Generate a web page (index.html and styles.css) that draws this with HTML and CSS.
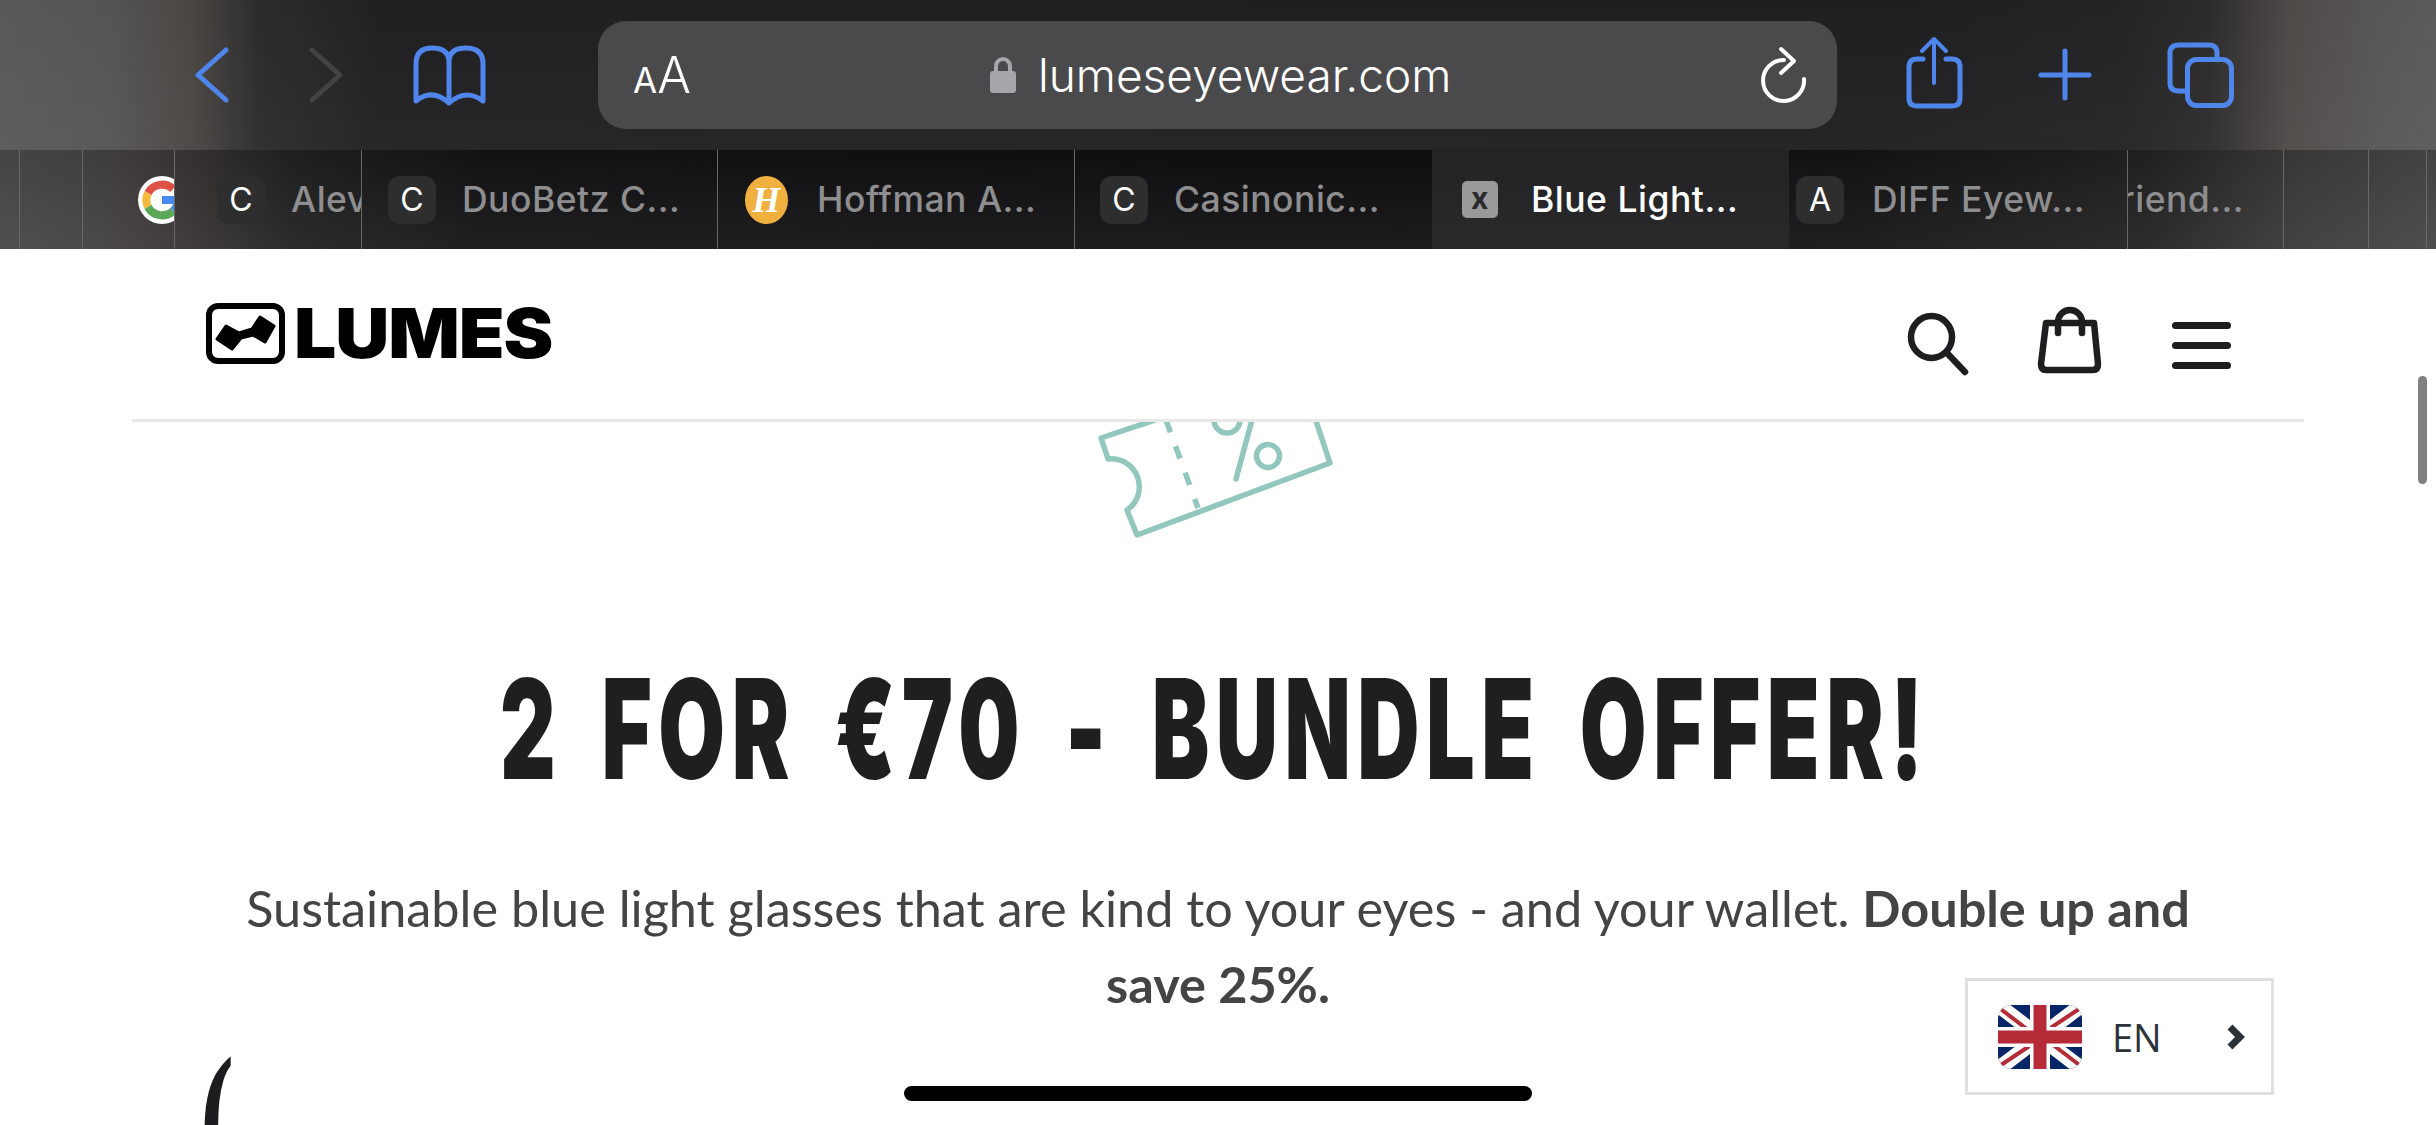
FILE: index.html
```html
<!DOCTYPE html>
<html lang="en">
<head>
    <meta charset="UTF-8">
    <title>2 for €70 - Bundle offer</title>
    <link rel="stylesheet" href="styles.css">
</head>
<body>
    <div class="browser">
        <div class="toolbar">
            <svg class="ico ico-back" viewBox="190 30 45 90"><path d="M226 50 L198 75 L226 100"/></svg>
            <svg class="ico ico-forward" viewBox="305 30 43 90"><path class="dim" d="M312 50 L340 75 L312 100"/></svg>
            <svg class="ico ico-book" viewBox="408 30 83 90">
                <path d="M449 62 Q449 48 432 48 Q416 48 416 64 V101 Q432 88 449 103 Q466 88 483 101 V64 Q483 48 466 48 Q449 48 449 62 V103"/>
            </svg>
            <div class="url-bar">
                <div class="text-size"><span class="small-a">A</span><span class="big-a">A</span></div>
                <div class="address">
                    <svg class="lock" viewBox="0 0 26 36">
                        <path class="shackle" d="M6 16 V9 A7 7 0 0 1 20 9 V16"/>
                        <rect y="14" width="26" height="22" rx="3"/>
                    </svg>
                    <span class="domain">lumeseyewear.com</span>
                </div>
                <svg class="reload" viewBox="1755 40 56 66">
                    <path d="M1804 77 A20.5 20.5 0 1 1 1784 58"/>
                    <path d="M1781 47 L1794 59 L1781 71"/>
                </svg>
            </div>
            <svg class="ico ico-share" viewBox="1900 30 68 90">
                <path d="M1923 59 H1917 Q1909 59 1909 67 V98 Q1909 106 1917 106 H1952 Q1960 106 1960 98 V67 Q1960 59 1952 59 H1946"/>
                <path class="thin" d="M1934 83 V39 M1922 51 L1934 39 L1946 51"/>
            </svg>
            <svg class="ico ico-plus" viewBox="2032 30 66 90"><path d="M2065 51 V98 M2041 75 H2089"/></svg>
            <svg class="ico ico-tabs" viewBox="2162 30 78 90">
                <path d="M2185 91 H2179 Q2170 91 2170 83 V53 Q2170 45 2179 45 H2209 Q2217 45 2217 53 V59"/>
                <rect x="2187.5" y="59.5" width="44" height="46" rx="9"/>
            </svg>
        </div>
        <div class="tab-strip">
            <div class="tab tab-edge-a"></div>
            <div class="tab tab-edge-b"></div>
            <div class="tab tab-google">
                <svg class="fav-google" viewBox="0 0 48 48">
                    <circle cx="24" cy="24" r="24" fill="#fff"/>
                    <path d="M35 13 A16 16 0 0 0 10 17" stroke="#dd5244"/>
                    <path d="M10 17 A16 16 0 0 0 10 31" stroke="#f2b93c"/>
                    <path d="M10 31 A16 16 0 0 0 35 35" stroke="#5aa855"/>
                    <path d="M35 35 A16 16 0 0 0 40 24 H24" stroke="#4a8af0"/>
                </svg>
            </div>
            <div class="tab tab-alev"><span class="fav">C</span><span class="label">Alevante</span></div>
            <div class="tab tab-wide"><span class="fav">C</span><span class="label">DuoBetz C...</span></div>
            <div class="tab tab-hoffman"><span class="fav-hoffman">H</span><span class="label">Hoffman A...</span></div>
            <div class="tab tab-casino"><span class="fav">C</span><span class="label">Casinonic...</span></div>
            <div class="tab tab-active"><span class="fav-close">x</span><span class="label">Blue Light...</span></div>
            <div class="tab tab-diff"><span class="fav">A</span><span class="label">DIFF Eyew...</span></div>
            <div class="tab tab-friend"><span class="label">Friend...</span></div>
            <div class="tab tab-edge-c"></div>
            <div class="tab tab-edge-d"></div>
        </div>
    </div>

    <nav class="site-nav">
        <a class="logo" href="#">
            <svg class="logo-mark" viewBox="206 302 79 61">
                <rect class="logo-frame" x="209" y="305" width="73" height="55" rx="9"/>
                <path class="logo-glasses" d="M226 325 L239 332 L252 328 L260 316 L274 325 L265 341 L253 334 L241 337 L232 348 L217 338 Z"/>
            </svg>
            <span class="logo-text">LUMES</span>
        </a>
        <div class="nav-icons">
            <svg class="nav-search" viewBox="1900 300 72 80">
                <ellipse cx="1931.5" cy="337" rx="20.5" ry="21"/>
                <path d="M1947 353 L1965 372"/>
            </svg>
            <svg class="nav-bag" viewBox="2036 300 68 80">
                <path d="M2046 323 H2094 L2098 364 Q2098 370 2093 370 H2046 Q2041 370 2041 364 Z"/>
                <path d="M2058 333 V322 A12 12 0 0 1 2082 322 V333"/>
            </svg>
            <div class="burger"><span></span><span></span><span></span></div>
        </div>
    </nav>

    <main class="offer">
        <svg class="ticket" viewBox="1090 422 256 123">
            <path d="M1158 419 L1101 438 L1108 459 A28 28 0 0 1 1127 510 L1137 535 L1330 463 L1314 415"/>
            <path class="ticket-dash" d="M1166 420 L1198 508"/>
            <path d="M1252 420 L1236 479"/>
            <circle cx="1227" cy="420" r="13"/>
            <circle cx="1268" cy="456" r="11.5"/>
        </svg>
        <h1 class="offer-title"><span class="offer-title-text">2 FOR €70 - BUNDLE OFFER!</span></h1>
        <p class="offer-text">Sustainable blue light glasses that are kind to your eyes - and your wallet. <strong>Double up and<br>save 25%.</strong></p>
        <div class="quote-mark">(</div>
    </main>

    <div class="lang-switch">
        <svg class="flag" viewBox="0 0 84 64">
            <rect width="84" height="64" fill="#082567"/>
            <path d="M0 0 L84 64 M84 0 L0 64" stroke="#fff" stroke-width="15"/>
            <path d="M0 2 L42 34 M84 2 L42 30 M0 62 L42 34 M84 62 L42 30" stroke="#b52b38" stroke-width="4"/>
            <path d="M42 0 V64 M0 32 H84" stroke="#fff" stroke-width="20"/>
            <path d="M42 0 V64 M0 32 H84" stroke="#b52b38" stroke-width="13"/>
        </svg>
        <span class="lang-code">EN</span>
        <svg class="lang-arrow" viewBox="0 0 18 26"><path d="M3 3 L13 13 L3 23"/></svg>
    </div>

    <div class="scroll-thumb"></div>
    <div class="home-bar"></div>
</body>
</html>
```

FILE: styles.css
```css
* {
    box-sizing: border-box;
}

body {
    margin: 0;
    width: 2436px;
    height: 1125px;
    overflow: hidden;
    position: relative;
    background-color: #ffffff;
    font-family: "Lato", sans-serif;
}

/* Safari bar */
.browser {
    height: 249px;
}

.toolbar {
    height: 150px;
    display: flex;
    align-items: center;
    padding-left: 190px;
    background:
        linear-gradient(to bottom, rgba(255,255,255,0), rgba(255,255,255,0.03)),
        linear-gradient(90deg, #585858 0, #555453 110px, #4a4643 190px, #2c2b2c 260px, #202023 380px, #1f1f22 1900px, #232325 2120px, #2d2b2c 2210px, #4f4a48 2290px, #565554 2370px, #5a5a5a 100%);
}

.ico {
    height: 90px;
    flex: none;
    fill: none;
    stroke: #4f86ec;
    stroke-width: 5;
    stroke-linecap: round;
    stroke-linejoin: round;
}

.ico-back {
    width: 45px;
}

.ico-forward {
    width: 43px;
    margin-left: 70px;
}

.ico .dim {
    stroke: #434345;
}

.ico-book {
    width: 83px;
    margin-left: 60px;
}

.ico-share {
    width: 68px;
    margin-left: 63px;
}

.ico-share .thin {
    stroke-width: 4;
}

.ico-plus {
    width: 66px;
    margin-left: 64px;
}

.ico-tabs {
    width: 78px;
    margin-left: 64px;
}

.url-bar {
    width: 1239px;
    height: 108px;
    margin-left: 107px;
    flex: none;
    display: flex;
    align-items: center;
    padding-left: 35px;
    padding-right: 26px;
    background-color: #4a4a4c;
    border-radius: 28px;
    color: #ffffff;
    font-family: "Inter", sans-serif;
}

.text-size {
    width: 62px;
    display: flex;
    align-items: baseline;
    font-weight: 400;
    height: 60px;
    line-height: 60px;
}

.small-a {
    font-size: 35px;
}

.big-a {
    font-size: 50px;
    font-weight: 300;
}

.address {
    margin-left: 295px;
    display: flex;
    align-items: center;
    gap: 22px;
}

.lock {
    width: 26px;
    height: 36px;
    fill: #a5a5aa;
}

.lock .shackle {
    fill: none;
    stroke: #a5a5aa;
    stroke-width: 4;
}

.domain {
    font-size: 46px;
    font-weight: 300;
    line-height: 60px;
}

.reload {
    width: 56px;
    height: 66px;
    margin-left: auto;
    fill: none;
    stroke: #ffffff;
    stroke-width: 4;
    stroke-linecap: round;
    stroke-linejoin: round;
}

/* tabs */
.tab-strip {
    height: 99px;
    display: flex;
    background:
        linear-gradient(to bottom, rgba(255,255,255,0), rgba(255,255,255,0.06)),
        linear-gradient(90deg, #454545 0, #3f3d3c 110px, #363231 180px, #201f1f 290px, #121214 480px, #0e0e10 1400px, #121214 1850px, #202020 2150px, #383838 2300px, #434343 100%);
}

.tab {
    flex: none;
    height: 99px;
    overflow: hidden;
    display: flex;
    align-items: center;
    gap: 26px;
    border-right: 1px solid #68686a;
    font-family: "Inter", sans-serif;
    font-size: 35.5px;
    font-weight: 500;
    letter-spacing: 0.5px;
    color: #8e8e90;
    white-space: nowrap;
}

.tab-edge-a { width: 20px; }
.tab-edge-b { width: 63px; }
.tab-google { width: 92px; padding-left: 55px; }
.tab-alev { width: 187px; padding-left: 42px; }
.tab-wide { width: 356px; padding-left: 26px; }
.tab-hoffman { width: 357px; padding-left: 27px; gap: 29px; }
.tab-casino { width: 357px; padding-left: 25px; border-right: none; }
.tab-diff { width: 339px; padding-left: 7px; gap: 28px; }
.tab-friend { width: 156px; }
.tab-edge-c { width: 85px; }
.tab-edge-d { width: 58px; }

.tab-active {
    width: 357px;
    padding-left: 30px;
    gap: 33px;
    border-right: none;
    color: #ffffff;
    background: linear-gradient(to bottom, #232326, #29292b);
}

.tab-friend .label {
    margin-left: -28px;
}

.fav {
    flex: none;
    width: 48px;
    height: 48px;
    display: flex;
    align-items: center;
    justify-content: center;
    background-color: #2e2e2f;
    border-radius: 12px;
    color: #ffffff;
    font-size: 32px;
    font-weight: 400;
    letter-spacing: 0;
}

.fav-close {
    flex: none;
    width: 36px;
    height: 37px;
    display: flex;
    align-items: center;
    justify-content: center;
    background-color: #99999b;
    border-radius: 5px;
    color: #2a2a2b;
    font-size: 30px;
    font-weight: 700;
    line-height: 30px;
    padding-bottom: 4px;
}

.fav-hoffman {
    flex: none;
    width: 43px;
    height: 48px;
    display: flex;
    align-items: center;
    justify-content: center;
    background-color: #efb040;
    border-radius: 50%;
    color: #ffffff;
    font-family: "Liberation Serif", serif;
    font-size: 36px;
    font-style: italic;
    font-weight: 700;
}

.fav-google {
    flex: none;
    width: 48px;
    height: 48px;
    fill: none;
    stroke-width: 8;
}

/* site header */
.site-nav {
    position: relative;
    height: 173px;
    margin: 0 132px;
    padding: 51px 73px 0 74px;
    display: flex;
    align-items: flex-start;
    background-color: #ffffff;
    border-bottom: 3px solid #e8e8e8;
}

.logo {
    display: flex;
    align-items: center;
    gap: 9px;
    height: 63px;
    margin-top: 2px;
    color: #000000;
    text-decoration: none;
}

.logo-mark {
    width: 79px;
    height: 61px;
}

.logo-frame {
    fill: none;
    stroke: #000000;
    stroke-width: 6;
}

.logo-glasses {
    fill: #000000;
    stroke: #000000;
    stroke-width: 3;
    stroke-linejoin: round;
}

.logo-text {
    display: inline-block;
    font-family: "Inter", sans-serif;
    font-size: 69px;
    font-weight: 900;
    line-height: 63px;
    letter-spacing: -1px;
    transform: scaleX(1.085);
    transform-origin: left center;
}

.nav-icons {
    margin-left: auto;
    display: flex;
    align-items: flex-start;
}

.nav-search,
.nav-bag {
    height: 80px;
    fill: none;
    stroke: #1e1e20;
    stroke-width: 6.5;
    stroke-linecap: round;
    stroke-linejoin: round;
}

.nav-search {
    width: 72px;
}

.nav-bag {
    width: 68px;
    margin-left: 64px;
}

.burger {
    width: 59px;
    margin-left: 68px;
    padding-top: 22px;
    display: flex;
    flex-direction: column;
    gap: 13px;
}

.burger span {
    height: 7px;
    background-color: #1e1e20;
    border-radius: 4px;
}

/* offer */
.offer {
    height: 703px;
    overflow: hidden;
}

.ticket {
    display: block;
    width: 256px;
    height: 123px;
    margin: 0 auto;
    fill: none;
    stroke: #92c7bd;
    stroke-width: 5.5;
    stroke-linecap: round;
    stroke-linejoin: round;
}

.ticket .ticket-dash {
    stroke-dasharray: 13 15;
    stroke-linecap: butt;
}

.offer-title {
    margin: 124px 0 0;
    padding-right: 6px;
    text-align: center;
    font-family: "Inter", sans-serif;
    font-size: 139px;
    font-weight: 900;
    line-height: 120px;
    color: #1f1f20;
}

.offer-title-text {
    display: inline-block;
    white-space: nowrap;
    letter-spacing: 10.5px;
    word-spacing: 25px;
    transform: scaleX(0.62);
}

.offer-text {
    margin: 81px 0 0;
    text-align: center;
    font-size: 50.4px;
    line-height: 76px;
    color: #444444;
}

.quote-mark {
    margin: 10px 0 0 200px;
    width: 60px;
    font-family: "Liberation Serif", serif;
    font-size: 170px;
    font-weight: 700;
    line-height: 170px;
    color: #1c1c1e;
    transform: scaleX(0.6);
    transform-origin: left center;
}

/* overlays */
.lang-switch {
    position: absolute;
    left: 1965px;
    top: 978px;
    width: 309px;
    height: 117px;
    padding-left: 30px;
    display: flex;
    align-items: center;
    background-color: #ffffff;
    border: 3px solid #e0e0e0;
}

.flag {
    width: 84px;
    height: 64px;
    border-radius: 14px;
}

.lang-code {
    margin-left: 30px;
    font-family: "Open Sans", sans-serif;
    font-size: 38px;
    color: #2c3338;
}

.lang-arrow {
    width: 18px;
    height: 26px;
    margin-left: 65px;
    fill: none;
    stroke: #2c3338;
    stroke-width: 7;
}

.scroll-thumb {
    position: absolute;
    left: 2418px;
    top: 376px;
    width: 9px;
    height: 108px;
    background-color: #808080;
    border-radius: 5px;
}

.home-bar {
    position: absolute;
    left: 904px;
    top: 1086px;
    width: 628px;
    height: 15px;
    background-color: #000000;
    border-radius: 8px;
}
```
